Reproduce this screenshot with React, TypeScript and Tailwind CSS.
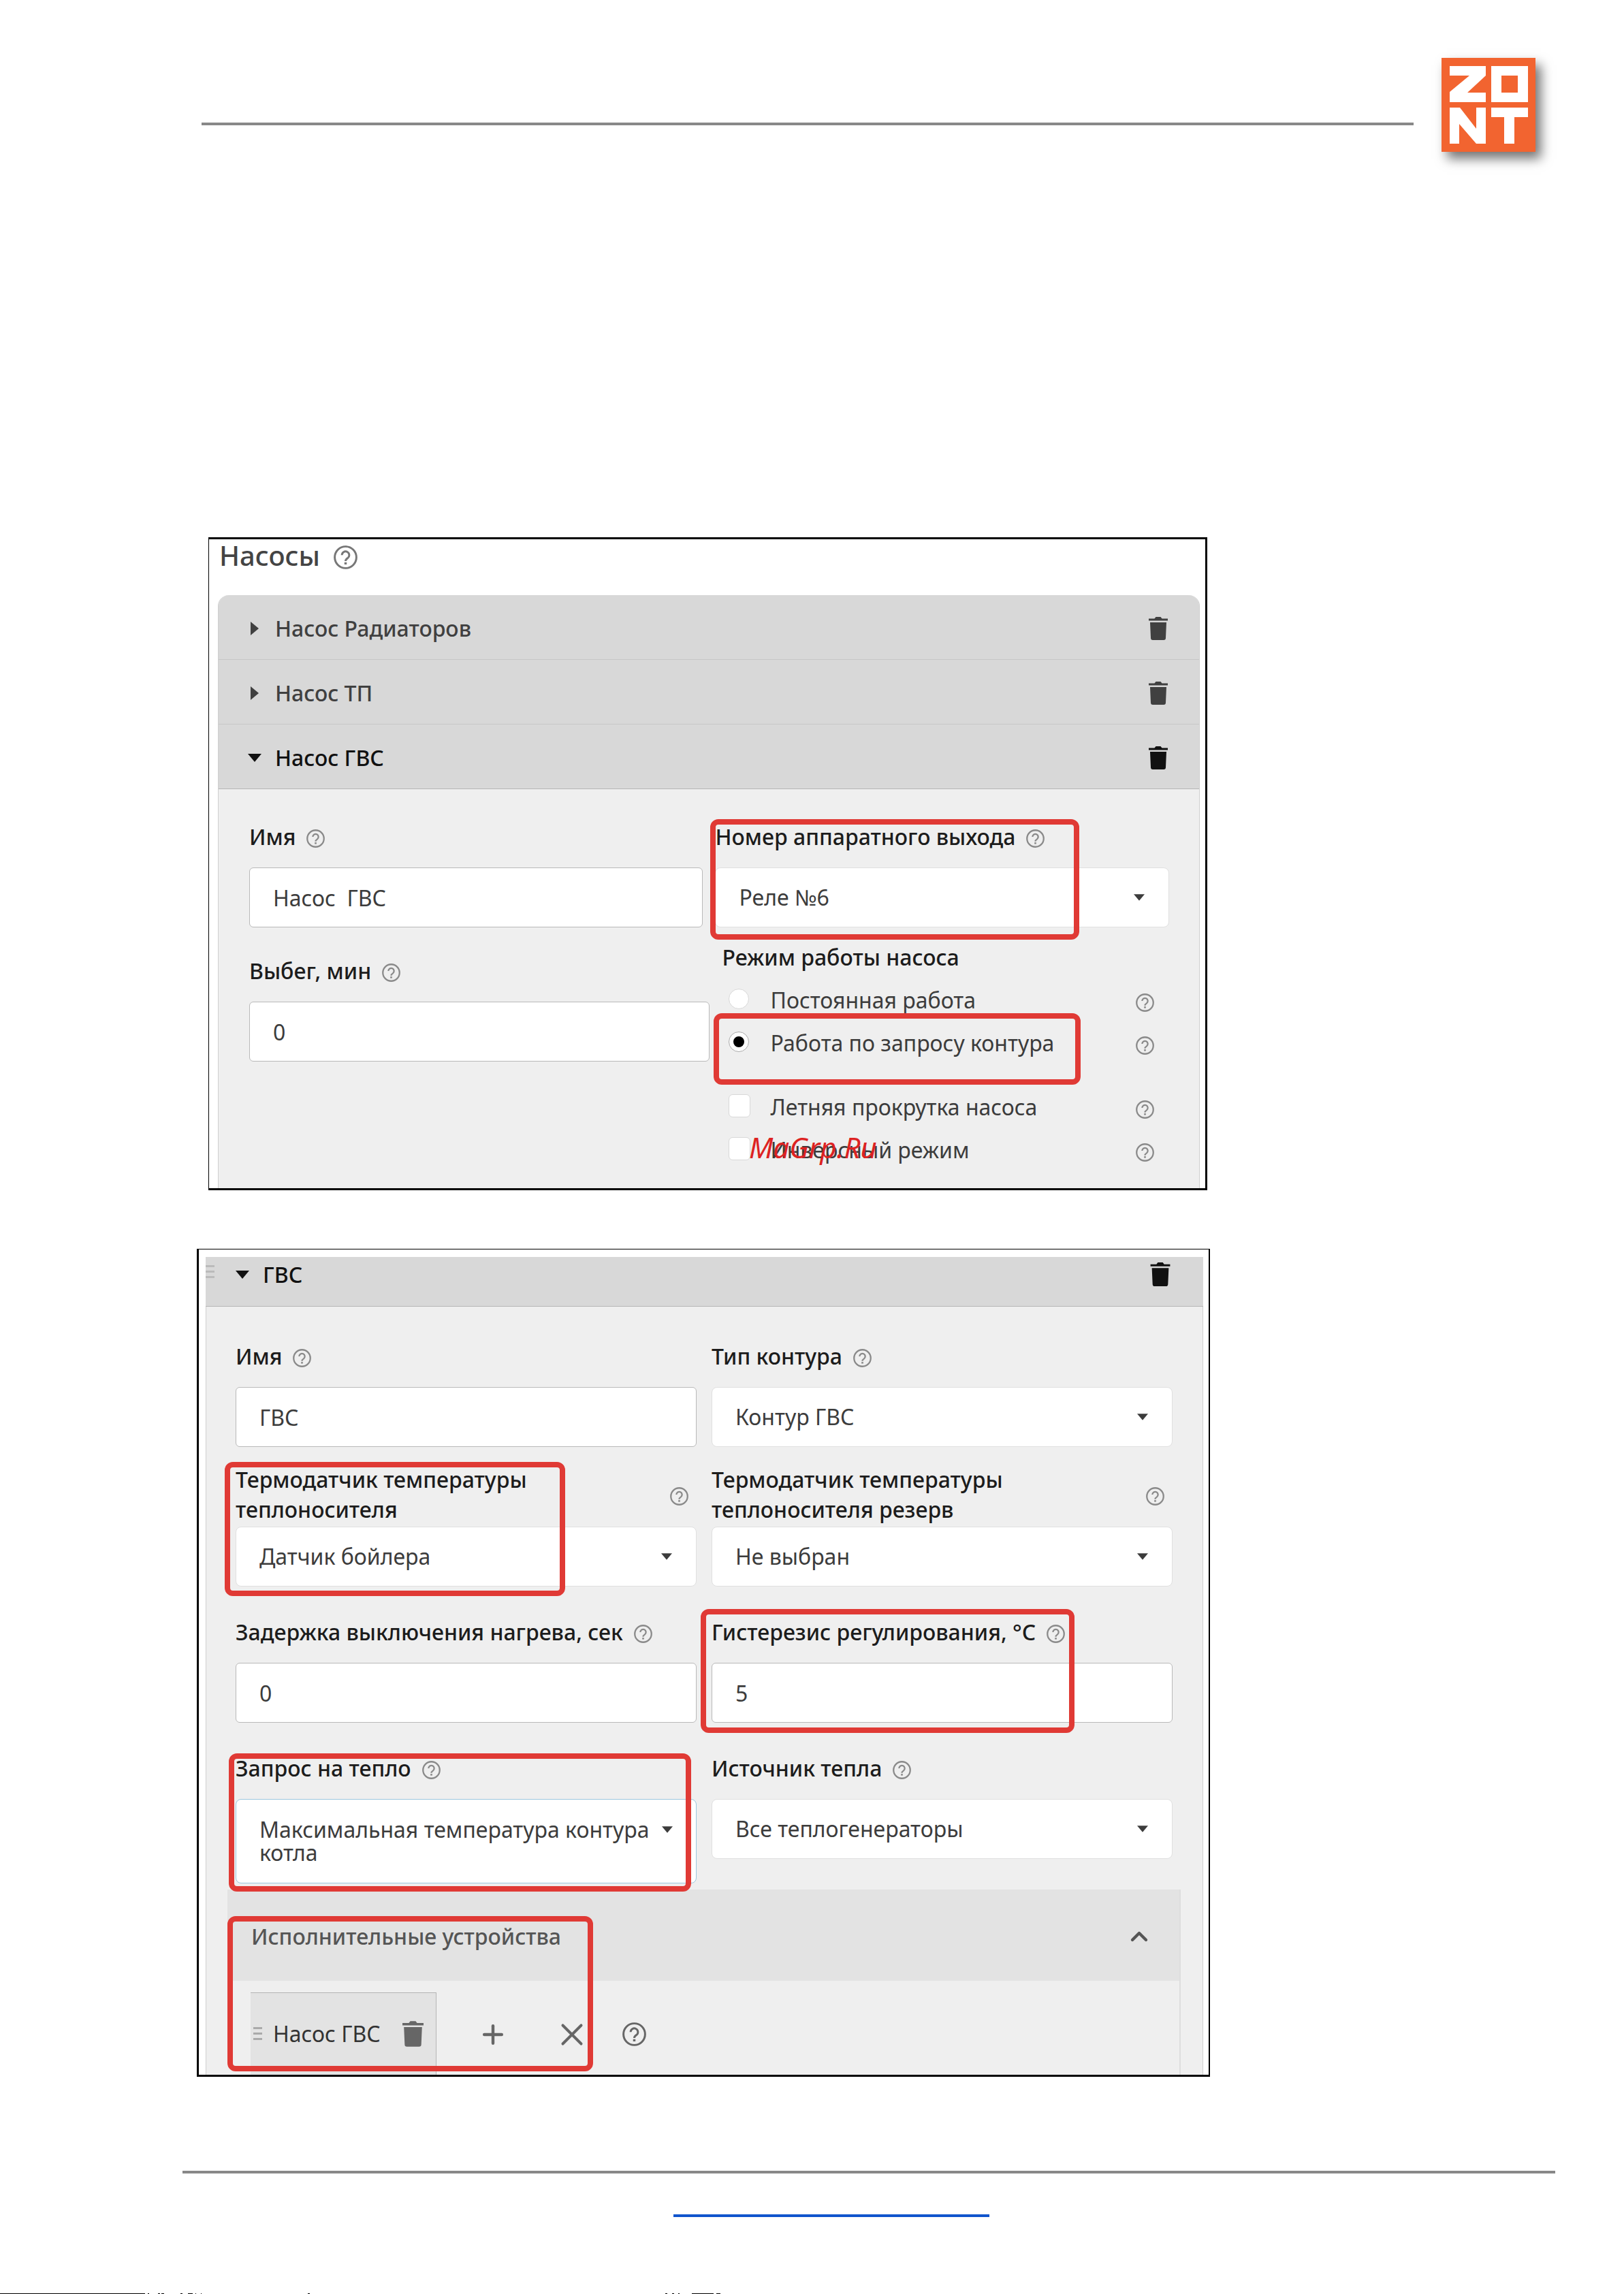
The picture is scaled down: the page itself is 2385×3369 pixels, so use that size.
import { useId, type ReactNode } from 'react'
import { ChevronUp, Plus, X } from 'lucide-react'

const PUMPS = [
  { name: 'Насос Радиаторов', open: false },
  { name: 'Насос ТП', open: false },
  { name: 'Насос ГВС', open: true },
]

const INPUT = 'block w-full rounded-md border border-[#b9b9b9] bg-white pl-[34px] text-[32px] text-[#3c3c3c]'

function Logo() {
  return (
    <svg viewBox="0 0 138 138" className="h-[138px] w-[138px] shrink-0 bg-[#f26430] shadow-[8px_10px_16px_rgba(0,0,0,0.55)]" role="img" aria-label="ZONT">
      <g fill="#fff">
        <path d="M12 12H65V26L38 51H65V65H12V50L41 26H12Z" />
        <path fillRule="evenodd" d="M73 12H127V65H73ZM88 26V51H112V26Z" />
        <path d="M12 73H27L51 104V73H65V126H51L26 97V126H12Z" />
        <path d="M73 73H127V87H107V126H92V87H73Z" />
      </g>
    </svg>
  )
}

function Help({ className = 'size-[27px] text-[#8a8a8a]' }: { className?: string }) {
  return (
    <svg viewBox="0 0 26 26" fill="none" stroke="currentColor" strokeWidth="2.2" className={`shrink-0 ${className}`} aria-hidden="true">
      <circle cx="13" cy="13" r="11.8" />
      <path d="M9 10.6a4 4 0 1 1 6.4 3.2c-1.6 1.1-2.4 1.7-2.4 3.2" />
      <path d="M13 18.4v2.4" strokeWidth="2.6" />
    </svg>
  )
}

function Trash({ className = '' }: { className?: string }) {
  return (
    <svg viewBox="0 0 28 34" fill="currentColor" className={className} aria-hidden="true">
      <path d="M0 2.6h8.5L10.5 0h7l2 2.6H28v3H0zM2 8h24l-1 23a3 3 0 0 1-3 3H6a3 3 0 0 1-3-3z" />
    </svg>
  )
}

function Caret({ className = '' }: { className?: string }) {
  return (
    <svg viewBox="0 0 20 12" fill="currentColor" className={className} aria-hidden="true">
      <path d="M0 0h20L10 12z" />
    </svg>
  )
}

function Grip({ className = '' }: { className?: string }) {
  return (
    <svg viewBox="0 0 13 20" fill="currentColor" className={`h-5 w-[13px] shrink-0 ${className}`} aria-hidden="true">
      <path d="M0 0h13v3H0zM0 8h13v3H0zM0 16h13v3H0z" />
    </svg>
  )
}

// Red frame drawn over a settings panel
function Mark({ className }: { className: string }) {
  return <div className={`pointer-events-none absolute rounded-xl border-8 border-[#e03a35] ${className}`} />
}

function Label({ htmlFor, wide, children }: { htmlFor: string; wide?: boolean; children: ReactNode }) {
  return (
    <div className={wide ? 'mb-[3px] flex items-center justify-between pr-3' : 'mb-[23px] flex items-center gap-4 pt-px'}>
      <label htmlFor={htmlFor} className="text-[32px] leading-[44px] font-medium whitespace-pre-line text-[#1c1c1c]">{children}</label>
      <Help className="mt-1 size-[27px] text-[#8a8a8a]" />
    </div>
  )
}

function TextField({ label, value, className = '' }: { label: string; value: string; className?: string }) {
  const id = useId()
  return (
    <div className={className}>
      <Label htmlFor={id}>{label}</Label>
      <input id={id} type="text" defaultValue={value} className={`${INPUT} h-[88px]`} />
    </div>
  )
}

function SelectField({ label, value, wide }: { label: string; value: string; wide?: boolean }) {
  const id = useId()
  return (
    <div>
      <Label htmlFor={id} wide={wide}>{label}</Label>
      <div className="relative">
        <select id={id} className="block h-[88px] w-full appearance-none rounded-lg border border-[#e0e0e0] bg-white pl-[34px] text-[32px] text-[#3c3c3c]">
          <option>{value}</option>
        </select>
        <Caret className="pointer-events-none absolute top-[38px] right-[36px] h-3 w-4 text-[#3c3c3c]" />
      </div>
    </div>
  )
}

// The value takes two lines, which a native select cannot show
function TallSelectField({ label, value }: { label: string; value: string }) {
  const id = useId()
  return (
    <div>
      <Label htmlFor={id}>{label}</Label>
      <div className="relative flex h-[124px] items-center rounded-lg border border-[#9cc6de] bg-white pr-[60px] pl-[34px]">
        <span aria-hidden="true" className="text-[32px] leading-[34px] whitespace-pre text-[#3c3c3c]">{value}</span>
        <Caret className="absolute top-[38px] right-[34px] h-3 w-4 text-[#3c3c3c]" />
        <select id={id} className="absolute inset-0 h-full w-full opacity-0">
          <option>{value}</option>
        </select>
      </div>
    </div>
  )
}

function Choice({ type, label, checked }: { type: 'radio' | 'checkbox'; label: string; checked?: boolean }) {
  const id = useId()
  const shape = type === 'radio' ? 'size-[30px] rounded-full checked:border-[#aaa]' : 'h-[34px] w-[32px] rounded-md'
  return (
    <div className="flex h-[63px] items-center pr-[22px] pl-5">
      <span className="relative flex w-[61px] items-center">
        <input id={id} type={type} name={type === 'radio' ? 'pump-mode' : undefined} defaultChecked={checked} className={`peer appearance-none border border-[#d8d8d8] bg-white ${shape}`} />
        {type === 'radio' && <span className="pointer-events-none absolute left-[7px] hidden size-4 rounded-full bg-black peer-checked:block" />}
      </span>
      <label htmlFor={id} className="grow pt-1 text-[32px] text-[#3c3c3c]">{label}</label>
      <Help className="mt-3 size-[27px] text-[#8a8a8a]" />
    </div>
  )
}

function PumpsPanel() {
  return (
    <section className="relative ml-[306px] w-full max-w-[1467px] border-y-3 border-r-3 border-l border-black bg-white pr-2 pl-[13px]">
      <h2 className="flex items-center gap-5 pl-0.5 text-[40px] leading-[48px] font-medium text-[#444]">
        Насосы <Help className="mt-1 size-[35px] text-[#777]" />
      </h2>
      <div className="mt-[34px] rounded-t-2xl border-x border-[#cfcfcf] bg-[#efefef]">
        {PUMPS.map(({ name, open }) => (
          <div key={name} className={`flex h-[95px] items-center border-b bg-[#d8d8d8] pt-1 pr-[46px] pl-[43px] first:rounded-t-2xl ${open ? 'border-[#b5b5b5] text-[#111]' : 'border-[#c6c6c6] text-[#404040]'}`}>
            <button type="button" aria-expanded={open} className="flex items-center text-[32px] font-medium">
              <Caret className={open ? 'mr-5 h-3 w-5' : 'mr-5 h-3 w-5 -rotate-90'} />
              {name}
            </button>
            <button type="button" aria-label="Удалить" className="ml-auto">
              <Trash className="h-[34px] w-7" />
            </button>
          </div>
        ))}
        <div className="grid grid-cols-[677fr_667fr] gap-2 pt-[47px] pr-11 pb-[27px] pl-[45px]">
          <div className="flex flex-col gap-[41px]">
            <TextField label="Имя" value="Насос  ГВС" className="mr-[10px]" />
            <TextField label="Выбег, мин" value="0" />
          </div>
          <div>
            <SelectField label="Номер аппаратного выхода" value="Реле №6" />
            <fieldset className="mt-[22px]">
              <legend className="mb-[7px] pl-[10px] text-[32px] leading-[44px] font-medium text-[#1c1c1c]">Режим работы насоса</legend>
              <Choice type="radio" label="Постоянная работа" />
              <Choice type="radio" label="Работа по запросу контура" checked />
            </fieldset>
            <div className="mt-[31px]">
              <Choice type="checkbox" label="Летняя прокрутка насоса" />
              <Choice type="checkbox" label="Инверсный режим" />
            </div>
          </div>
        </div>
      </div>
      <Mark className="top-[411px] left-[736px] h-[177px] w-[542px]" />
      <Mark className="top-[696px] left-[741px] h-[105px] w-[539px]" />
      <p className="absolute top-[865px] left-[793px] text-[42px] leading-[56px] text-[#d22] italic">MaGrp.Ru</p>
    </section>
  )
}

function CircuitPanel() {
  return (
    <section className="relative mt-[86px] ml-[289px] w-full max-w-[1488px] border-t border-r-2 border-b-3 border-l-3 border-black bg-white pt-[11px] pr-2 pl-[10px]">
      <div className="flex h-[73px] items-start border-b border-[#b5b5b5] bg-[#d8d8d8] pr-12 text-[#111]">
        <Grip className="mt-3 text-[#bbb]" />
        <button type="button" aria-expanded="true" className="ml-[31px] flex items-center text-[32px] leading-[52px] font-medium">
          <Caret className="mr-5 h-3 w-5" />
          ГВС
        </button>
        <button type="button" aria-label="Удалить" className="mt-2 ml-auto">
          <Trash className="h-[35px] w-[30px]" />
        </button>
      </div>
      <div className="border-x border-[#cfcfcf] bg-[#efefef] pt-[50px]">
        <div className="grid grid-cols-2 items-start gap-x-[22px] gap-y-11 pr-11 pl-[43px]">
          <TextField label="Имя" value="ГВС" />
          <SelectField label="Тип контура" value="Контур ГВС" />
          <div className="-mt-[18px]">
            <SelectField wide label={'Термодатчик температуры\nтеплоносителя'} value="Датчик бойлера" />
          </div>
          <div className="-mt-[18px]">
            <SelectField wide label={'Термодатчик температуры\nтеплоносителя резерв'} value="Не выбран" />
          </div>
          <TextField label="Задержка выключения нагрева, сек" value="0" />
          <TextField label="Гистерезис регулирования, °C" value="5" />
          <TallSelectField label="Запрос на тепло" value={'Максимальная температура контура\nкотла'} />
          <SelectField label="Источник тепла" value="Все теплогенераторы" />
        </div>
        <div className="mt-[9px] mr-8 ml-[31px] border-r-2 border-[#dedede]">
          <div className="flex h-[134px] items-center justify-between bg-[#e3e3e3] pt-1 pr-[39px] pl-[35px] text-[#555]">
            <h3 className="text-[32px] font-medium">Исполнительные устройства</h3>
            <button type="button" aria-label="Свернуть">
              <ChevronUp className="size-10" strokeWidth={2.6} />
            </button>
          </div>
          <div className="flex items-start pt-[17px] pl-[34px] text-[#666]">
            <div className="flex h-[121px] w-[273px] items-center border-t border-r border-[#b5b5b5] bg-[#e3e3e3] pl-1">
              <Grip className="text-[#aaa]" />
              <span className="ml-4 grow text-[32px] text-[#333]">Насос ГВС</span>
              <button type="button" aria-label="Удалить" className="mr-[18px]">
                <Trash className="h-[38px] w-[31px]" />
              </button>
            </div>
            <div className="flex h-[121px] items-center pt-0.5">
              <button type="button" aria-label="Добавить" className="ml-[61px]">
                <Plus className="size-11" strokeWidth={2.4} />
              </button>
              <button type="button" aria-label="Очистить" className="ml-[67px]">
                <X className="size-[54px]" strokeWidth={1.8} />
              </button>
              <Help className="ml-[47px] size-[35px] text-[#666]" />
            </div>
          </div>
        </div>
      </div>
      <Mark className="top-[312px] left-[38px] h-[197px] w-[500px]" />
      <Mark className="top-[528px] left-[737px] h-[182px] w-[549px]" />
      <Mark className="top-[740px] left-[44px] h-[203px] w-[679px]" />
      <Mark className="top-[979px] left-[42px] h-[228px] w-[537px]" />
    </section>
  )
}

export default function App() {
  return (
    <div className="flex min-h-screen flex-col bg-white font-['Noto_Sans',sans-serif]">
      <header className="flex items-start pt-[85px] pr-[130px] pl-[296px]">
        <div className="mt-[95px] mr-[41px] h-1 grow bg-[#888]" />
        <Logo />
      </header>
      <main className="pt-[566px]">
        <PumpsPanel />
        <CircuitPanel />
      </main>
      <footer className="mt-[138px] flex grow flex-col">
        <div className="mr-[101px] ml-[268px] h-1 bg-[#888]" />
        <a href="#" aria-label="Сайт" className="mt-[60px] ml-[989px] h-1 w-[464px] bg-[#1155cc]" />
        <svg viewBox="0 0 1060 1" className="mt-auto h-px w-[1060px]" shapeRendering="crispEdges" aria-hidden="true">
          <path d="M0 0h213v1H0zM217 0h2v1h-2zM232 0h3v1h-3zM237 0h4v1h-4zM265 0h3v1h-3zM276 0h7v1h-7zM287 0h1v1h-1zM295 0h1v1h-1zM452 0h3v1h-3zM977 0h3v1h-3zM987 0h3v1h-3zM996 0h2v1h-2zM1016 0h32v1h-32zM1052 0h6v1h-6z" />
        </svg>
      </footer>
    </div>
  )
}
